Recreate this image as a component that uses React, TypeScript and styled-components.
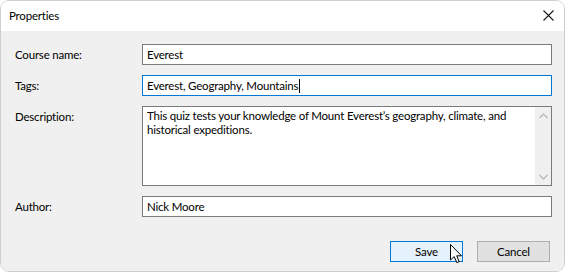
import React from "react";
import styled, { createGlobalStyle } from "styled-components";

const GlobalStyle = createGlobalStyle`
    html, body {
        margin: 0;
        padding: 0;
        background: #ffffff;
    }
    #root {
        width: 565px;
        height: 272px;
    }
    * {
        box-sizing: border-box;
    }
`;

const fields = [
    { label: "Course name:", value: "Everest" },
    { label: "Tags:", value: "Everest, Geography, Mountains", focused: true },
];

const App: React.FC = () => {
    return (
        <>
            <GlobalStyle />
            <Window>
                <TitleBar>
                    <Title>Properties</Title>
                    <CloseBtn aria-label="Close">
                        <svg width="11" height="11" viewBox="0 0 11 11">
                            <path d="M0.5 0.5 L10.5 10.5 M10.5 0.5 L0.5 10.5" stroke="#1a1a1a" strokeWidth="1.1" fill="none" />
                        </svg>
                    </CloseBtn>
                </TitleBar>
                <Body>
                    <Form>
                        {fields.map((f) => (
                            <React.Fragment key={f.label}>
                                <Label>{f.label}</Label>
                                <Field focused={f.focused}>
                                    {f.value}
                                    {f.focused ? <Caret /> : null}
                                </Field>
                            </React.Fragment>
                        ))}
                        <Label top>Description:</Label>
                        <TextArea>
                            <AreaText>
                                This quiz tests your knowledge of Mount Everest’s geography, climate, and
                                <br />
                                historical expeditions.
                            </AreaText>
                            <ScrollBar>
                                <svg width="9" height="6" viewBox="0 0 9 6">
                                    <path d="M0.5 5 L4.5 1 L8.5 5" stroke="#b4b4b4" strokeWidth="1.2" fill="none" />
                                </svg>
                                <svg width="9" height="6" viewBox="0 0 9 6">
                                    <path d="M0.5 1 L4.5 5 L8.5 1" stroke="#b4b4b4" strokeWidth="1.2" fill="none" />
                                </svg>
                            </ScrollBar>
                        </TextArea>
                        <Label>Author:</Label>
                        <Field>Nick Moore</Field>
                    </Form>
                    <Footer>
                        <Button primary>
                            Save
                            <Pointer width="13" height="20" viewBox="0 0 13 20">
                                <path
                                    d="M0.5 0.5 L0.5 16 L4.2 12.6 L6.8 18.6 L9.2 17.6 L6.7 11.8 L11.5 11.8 Z"
                                    fill="#ffffff"
                                    stroke="#000000"
                                    strokeWidth="1"
                                    strokeLinejoin="miter"
                                />
                            </Pointer>
                        </Button>
                        <Button>Cancel</Button>
                    </Footer>
                </Body>
            </Window>
        </>
    );
};

const Window = styled.div`
    width: 565px;
    height: 272px;
    display: flex;
    flex-direction: column;
    border: 1px solid #cfcfcf;
    border-radius: 9px;
    overflow: hidden;
    font-family: Lato, "Noto Sans", sans-serif;
    font-size: 11.5px;
    letter-spacing: -0.2px;
    color: #000000;
`;

const TitleBar = styled.div`
    height: 30px;
    flex: none;
    display: flex;
    align-items: center;
    justify-content: space-between;
    background: #ffffff;
    padding: 0 9px 0 8px;
`;

const Title = styled.div`
    line-height: 16px;
    margin-top: -1px;
`;

const CloseBtn = styled.div`
    width: 12px;
    height: 12px;
    display: flex;
    align-items: center;
    justify-content: center;
    margin-right: 1px;
    margin-top: -1px;
`;

const Body = styled.div`
    flex: 1;
    background: #f0f0f0;
    display: flex;
    flex-direction: column;
    padding: 13px 12px 0 14px;
`;

const Form = styled.div`
    display: grid;
    grid-template-columns: 127px minmax(0, 1fr);
    grid-template-rows: 21px 21px 80px 21px;
    row-gap: 10px;
`;

const Label = styled.div<{ top?: boolean }>`
    display: flex;
    align-items: ${({ top }) => (top ? "flex-start" : "center")};
    padding-top: ${({ top }) => (top ? "3px" : "0")};
    line-height: 16px;
    white-space: nowrap;
`;

const Field = styled.div<{ focused?: boolean }>`
    height: 21px;
    display: flex;
    align-items: center;
    padding: 0 4px;
    background: #ffffff;
    border: 1px solid ${({ focused }) => (focused ? "#0078d7" : "#7a7a7a")};
    line-height: 16px;
    white-space: nowrap;
`;

const Caret = styled.span`
    display: inline-block;
    width: 1px;
    height: 14px;
    background: #000000;
    margin-left: 1px;
`;

const TextArea = styled.div`
    height: 80px;
    display: flex;
    background: #ffffff;
    border: 1px solid #7a7a7a;
`;

const AreaText = styled.div`
    flex: 1;
    min-width: 0;
    padding: 2px 4px;
    line-height: 14px;
    white-space: nowrap;
    overflow: hidden;
`;

const ScrollBar = styled.div`
    width: 16px;
    flex: none;
    background: #f0f0f0;
    display: flex;
    flex-direction: column;
    justify-content: space-between;
    align-items: center;
    padding: 6px 0 5px;
`;

const Footer = styled.div`
    display: flex;
    justify-content: flex-end;
    gap: 14px;
    margin-top: 24px;
    padding-right: 2px;
`;

const Button = styled.div<{ primary?: boolean }>`
    position: relative;
    width: 73px;
    height: 21px;
    display: flex;
    align-items: center;
    justify-content: center;
    background: ${({ primary }) => (primary ? "#e5f1fb" : "#e1e1e1")};
    border: 1px solid ${({ primary }) => (primary ? "#0078d7" : "#adadad")};
    line-height: 16px;
`;

const Pointer = styled.svg`
    position: absolute;
    left: 59px;
    top: 2px;
`;

export default App;
